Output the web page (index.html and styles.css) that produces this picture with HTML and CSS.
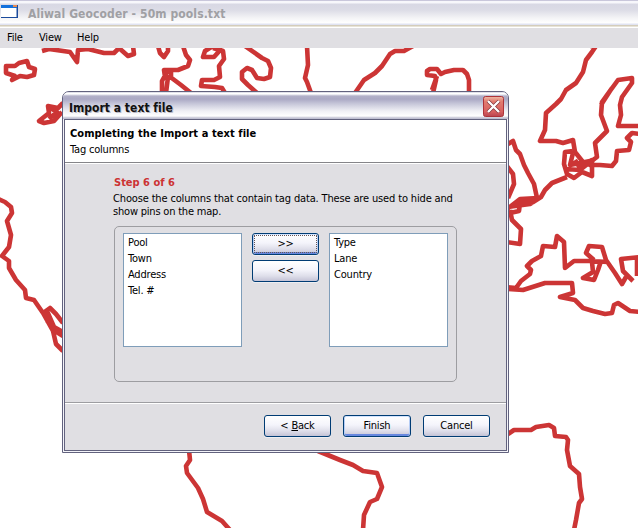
FILE: index.html
```html
<!DOCTYPE html>
<html lang="en">
<head>
<meta charset="utf-8">
<title>Aliwal Geocoder - 50m pools.txt</title>
<link rel="stylesheet" href="styles.css">
</head>
<body>
<div class="app">
  <header class="app-title">
    <svg class="app-icon" width="18" height="14" viewBox="0 0 18 14"><rect width="17" height="13" fill="#1a4a9c"/><rect width="16" height="3" fill="#1470dc"/><rect x="12" width="4" height="2" fill="#e58a52"/><rect y="3" width="15.500" height="9" fill="#fff"/></svg>
    <span class="app-name">Aliwal Geocoder - 50m pools.txt</span>
  </header>
  <nav class="menu"><span class="m-file">File</span><span class="m-view">View</span><span class="m-help">Help</span></nav>
  <main class="map">
    <svg class="coast" width="638" height="480" viewBox="0 48 638 480">
      <path d="M42,51L49,49L56,50L70,52L77,62L78,50L88,49L104,53L114,53L119,48L128,56L134,54L133,46"/>
      <path d="M6,66L15,66L19,63L27,61L29,67L35,69L34,75L27,77L20,76L12,80L15,76L6,73Z"/>
      <path d="M158,46L160,53L164,57L168,51V46M183,46L186,55L190,60L188,66L178,70L168,70L162,81V93M164,70H171V77H165ZM169,76L181,85L191,93M168,77L166,93"/>
      <path d="M213,46L205,51L203,57L214,57L222,48M213,48L223,51L224,59L219,66L220,77L214,80L202,80L201,86L215,87L222,88L225,93"/>
      <path d="M245,46L262,58L268,61L271,68L270,77L264,79L257,78L252,70L247,68L242,72L242,79L248,85L257,93M307,46L308,65L305,78L307,82L311,93"/>
      <path d="M355,93L364,80L375,73L382,66L386,60L390,54L395,51L404,51L413,46M433,93L436,80L435,76L427,75V71L430,69L437,69L441,74L445,72L454,70L463,70L467,74L469,80V93M437,76L432,90"/>
      <path d="M590,46H596L592,52L586,60L583,72L576,83L566,90L561,99L556,104L546,113L545,130L540,141L556,141L563,143L573,140L575,152L583,162L590,165L600,165L612,166L616,161L617,151L629,150L631,142L627,138L632,133L640,134"/>
      <path d="M601,105L610,91L618,80L632,78V83L622,97L620,105L621,115L618,126H640M612,88L602,102L601,115L607,131L595,143L597,157L589,163"/>
      <path d="M573,151L565,152L564,164L567,174L574,178L582,172L592,176V160L580,168L575,160M573,153L570,165L590,161M565,169L580,170L590,162M570,163L582,164"/>
      <path d="M567,177L552,183L545,190L541,197L530,204L508,207M508,144L513,141L516,150L520,154L524,165L528,173L534,184L537,198M506,165L513,174L514,184L508,198M506,210L520,199L538,198M510,213L519,211L520,203L534,202M510,210L512,220L521,229L520,244L506,242"/>
      <path d="M506,287L516,288L521,281L530,274L531,270L527,266L532,261L541,256L543,246L555,247L557,236L564,242L565,268L574,261L590,261L608,262M594,260L586,253L589,246L602,247L606,260L615,273L622,284L626,277M592,262L593,272L583,278L594,280L598,270L601,261M640,257L621,259L623,271L633,281M637,258V276"/>
      <path d="M508,289L523,290L545,283L572,283L573,293L560,297L575,300L583,308L593,311L605,314L612,313L614,305L618,303L630,311L640,312"/>
      <path d="M63,103L58,108L48,106L49,113L39,121L44,123L54,121L62,112M49,107L57,112L49,119"/>
      <path d="M-2,199L5,202L11,207L12,213L7,221L11,235L9,247L2,256L9,261L9,268L16,280L25,290L26,298L34,300L43,313L53,331L56,344L63,351M43,313L50,308L56,314L63,323M46,320L51,322L55,331L63,336M47,311L54,327L63,332"/>
      <path d="M189,450L190,460L186,466L187,473L198,488L203,499L207,512L222,521L230,530M318,451L340,460L353,465L363,471L377,473L382,487L377,499L370,502L364,515L363,530"/>
      <path d="M508,434L514,430L531,430L536,427L549,425L554,428L555,436L566,437L568,440L567,450L570,466L579,474L580,487L582,499L579,503L576,520L574,530"/>
    </svg>
    <section class="dialog">
      <div class="dlg-title"><span class="dlg-name">Import a text file</span>
        <svg class="close" width="21" height="21" viewBox="0 0 21 21"><defs><linearGradient id="red" x2="0" y2="1"><stop offset="0" stop-color="#eebba6"/><stop offset=".25" stop-color="#e27c70"/><stop offset=".75" stop-color="#d86060"/><stop offset="1" stop-color="#b84450"/></linearGradient></defs><rect x=".5" y=".5" width="20" height="20" rx="2" fill="url(#red)" stroke="#ad3339"/><path d="M5 5L16 16M16 5L5 16" stroke="#7b3238" stroke-width="3.600"/><path d="M5 5L16 16M16 5L5 16" stroke="#fff" stroke-width="2.400"/></svg>
      </div>
      <div class="client">
        <div class="head"><div class="head-main">Completing the Import a text file</div><div class="head-sub">Tag columns</div></div>
        <div class="body">
          <div class="step">Step 6 of 6</div>
          <p class="intro"><span class="line1">Choose the columns that contain tag data. These are used to hide and</span><br><span class="line2">show pins on the map.</span></p>
          <div class="group">
            <div class="list"><div class="pool">Pool</div><div class="town">Town</div><div class="address">Address</div><div class="tel">Tel. #</div></div>
            <div class="movers"><button class="btn default focus">&gt;&gt;</button><button class="btn">&lt;&lt;</button></div>
            <div class="list"><div class="type">Type</div><div class="lane">Lane</div><div class="country">Country</div></div>
          </div>
        </div>
        <footer class="foot"><button class="btn back">&lt; <u>B</u>ack</button><button class="btn default finish">Finish</button><button class="btn">Cancel</button></footer>
      </div>
    </section>
  </main>
</div>
</body>
</html>
```
FILE: styles.css
```css
* { box-sizing: border-box; }
body { margin: 0; overflow: hidden; font: 11px/13px "DejaVu Sans Condensed", "DejaVu Sans", sans-serif; font-stretch: condensed; letter-spacing: -0.2px; color: #000; background: #fff; }
.app { width: 638px; height: 528px; overflow: hidden; }
.app-title { height: 28px; display: flex; padding-top: 5px; border-bottom: 1px solid #fff; background: linear-gradient(#c9c7db 0 1px, #f7f7fb 1px 3px, #d8d8e4 4px, #dcdce6 10px, #f4f4f6 18px, #fff 23px, #e0e3f2 24px 25px, #d4cdbb 25px 26px, #e8e4d8 26px); }
.app-icon { margin-left: 1px; flex: none; }
.app-name { margin-left: 9px; padding-top: 1px; font: bold 12px/17px "DejaVu Sans Condensed", "DejaVu Sans", sans-serif; font-stretch: condensed; color: #a0a0a4; white-space: nowrap; letter-spacing: 0.1px; }
.menu { height: 20px; background: #e0dfe3; display: flex; line-height: 20px; padding-left: 7px; }
.m-file { width: 32px; }
.m-view { width: 38px; }
.map { position: relative; height: 480px; }
.coast { display: block; }
.coast path { fill: none; stroke: #cc3535; stroke-width: 4.6; stroke-linejoin: round; }
.dialog { position: absolute; left: 62px; top: 43px; width: 447px; height: 362px; border: 1px solid #62627e; border-radius: 7px 7px 0 0; background: #f4f4f9; padding: 0 1px 1px; overflow: hidden; }
.dlg-title { height: 27px; margin: 0 -1px; padding: 4px 4px 0 6px; display: flex; justify-content: space-between; background: linear-gradient(#c4c4d6 0, #fff 1px 2px, #b2b0c8 4px, #aaa8c4 7px, #c8c8da 12px, #f0f0f5 19px, #fff 24px, #c0c0d2 26px); }
.dlg-name { font: bold 12px/16px "DejaVu Sans Condensed", "DejaVu Sans", sans-serif; font-stretch: condensed; padding-top: 4px; letter-spacing: 0.02px; color: #111; text-shadow: 1px 1px 0 #b8b8c4; }
.client { height: 332px; border: 1px solid #62627e; background: #e0dfe3; }
.head { height: 43px; background: #fff; border-bottom: 1px solid #858589; padding: 7px 0 0 5px; box-shadow: 0 1px #fff; }
.head-main { font-weight: bold; line-height: 13px; letter-spacing: 0.07px; }
.head-sub { padding-top: 3px; }
.body { height: 239px; padding: 13px 49px 0; }
.step { color: #cc3333; font-weight: bold; letter-spacing: 0; }
.intro { margin: 3px -9px 0 -1px; white-space: nowrap; }
.line1 { letter-spacing: -0.15px; }
.group { height: 156px; width: 343px; margin-top: 8px; border: 1px solid #9d9da1; border-radius: 5px; padding: 6px 8px; display: flex; align-items: flex-start; }
.list { width: 119px; height: 114px; background: #fff; border: 1px solid #7f9db9; padding: 1px 4px; line-height: 16px; }
.movers { width: 67px; margin: 0 10px; display: grid; gap: 5px; }
.btn { display: block; width: 67px; height: 22px; margin: 0; padding: 0 0 1px; border: 1px solid #003c74; border-radius: 3px; font: inherit; letter-spacing: inherit; color: #000; background: linear-gradient(#fff, #f4f4fb 45%, #dedeea 75%, #c4c3d6); box-shadow: 0 1px #eeeef1; }
.default { box-shadow: inset 0 1px #d2e4ff, inset 1px 0 #b6cdf5, inset -1px 0 #b6cdf5, inset 0 -2px #6788df, 0 1px #eeeef1; }
.focus { outline: 1px dotted #655; outline-offset: -3px; }
.foot { height: 48px; border-top: 1px solid #9d9da1; box-shadow: inset 0 1px #fff; padding: 12px 16px 0 0; display: flex; justify-content: flex-end; gap: 12px; }
.finish { width: 68px; }
```
